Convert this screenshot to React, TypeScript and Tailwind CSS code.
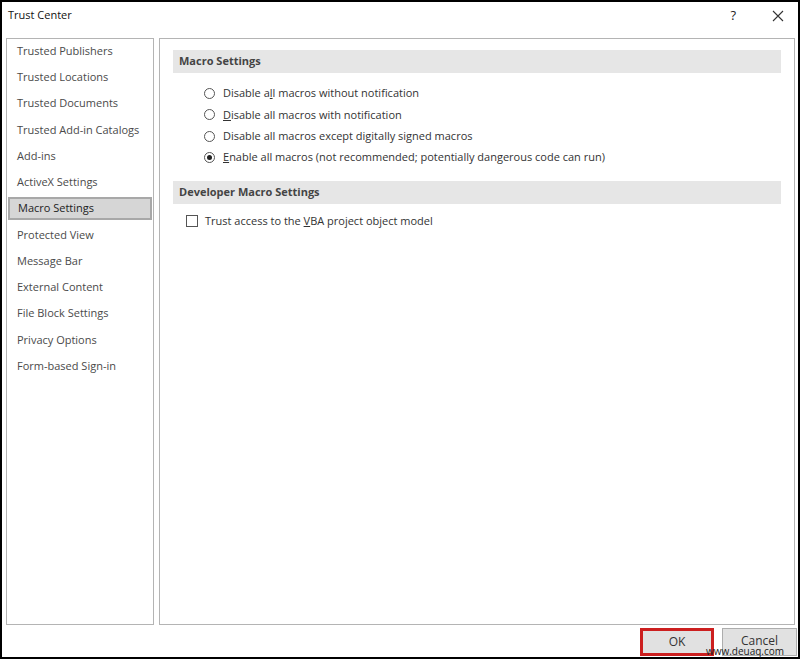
import React from "react";

const navItems = [
  "Trusted Publishers",
  "Trusted Locations",
  "Trusted Documents",
  "Trusted Add-in Catalogs",
  "Add-ins",
  "ActiveX Settings",
  "Macro Settings",
  "Protected View",
  "Message Bar",
  "External Content",
  "File Block Settings",
  "Privacy Options",
  "Form-based Sign-in",
];

const Radio = ({ checked, children }: { checked?: boolean; children: React.ReactNode }) => (
  <div className="flex h-[21.3px] items-center pl-[31px]">
    <span className="flex h-[11px] w-[11px] items-center justify-center rounded-full border border-[#555] bg-white">
      {checked && <span className="h-[5px] w-[5px] rounded-full bg-[#222]" />}
    </span>
    <span className="ml-[8px]">{children}</span>
  </div>
);

const SectionBar = ({ title }: { title: string }) => (
  <div className="flex h-[23px] items-center bg-[#e6e6e6] pl-[6px] font-bold text-[#444]">
    {title}
  </div>
);

export default function App() {
  return (
    <div className="relative flex h-[659px] w-[800px] flex-col border-2 border-black bg-white font-['Open_Sans','Noto_Sans',sans-serif] text-[11px] text-[#333]">
      {/* title bar */}
      <div className="flex h-[36px] shrink-0 items-start pt-[5px]">
        <span className="ml-[6px] text-[#111]">Trust Center</span>
        <span className="ml-auto mr-[36px] mt-[2px] text-[13px] leading-none text-[#222]">?</span>
        <svg width="12" height="12" viewBox="0 0 12 12" className="mr-[14px] mt-[3px]">
          <path d="M1 1l10 10M11 1L1 11" stroke="#333" strokeWidth="1.1" />
        </svg>
      </div>

      {/* body */}
      <div className="flex h-[587px] shrink-0 gap-[5px] pl-[4px]">
        <div className="w-[148px] border border-[#b4b4b4] text-[#4a4a4a]">
          <div className="-mt-[1px]">
            {navItems.map((item) => (
              <div key={item} className="flex h-[26.25px] items-center">
                {item === "Macro Settings" ? (
                  <div className="mx-[1px] flex h-[23px] flex-1 items-center border-2 border-[#a8a8a8] bg-[#d6d6d6] pl-[8px] text-[#222]">
                    {item}
                  </div>
                ) : (
                  <span className="pl-[10px]">{item}</span>
                )}
              </div>
            ))}
          </div>
        </div>

        <div className="w-[636px] border border-[#b4b4b4] pl-[13px] pr-[13px] pt-[11px]">
          <SectionBar title="Macro Settings" />
          <div className="mt-[10px]">
            <Radio>
              Disable a<u>l</u>l macros without notification
            </Radio>
            <Radio>
              <u>D</u>isable all macros with notification
            </Radio>
            <Radio>
              Disable all macros except di<u>g</u>itally signed macros
            </Radio>
            <Radio checked>
              <u>E</u>nable all macros (not recommended; potentially dangerous code can run)
            </Radio>
          </div>
          <div className="mt-[13px]">
            <SectionBar title="Developer Macro Settings" />
          </div>
          <div className="mt-[7px] flex h-[20px] items-center pl-[13px]">
            <span className="h-[12px] w-[12px] border border-[#555] bg-white" />
            <span className="ml-[7px]">
              Trust access to the <u>V</u>BA project object model
            </span>
          </div>
        </div>
      </div>

      {/* footer */}
      <div className="flex flex-1 items-start justify-end gap-[8px] pr-[1px] pt-[3px]">
        <div className="flex h-[28px] w-[74px] items-center justify-center border-[3px] border-[#cc1f1f] bg-[#e1e1e1] text-[12px] text-[#333]">
          OK
        </div>
        <div className="flex h-[28px] w-[75px] items-center justify-center border border-[#adadad] bg-[#e1e1e1] pb-[2px] text-[12px] text-[#333]">
          Cancel
        </div>
      </div>

      <span className="absolute bottom-[1px] right-[14px] text-[10px] leading-none text-[#222]">
        www.deuaq.com
      </span>
    </div>
  );
}
